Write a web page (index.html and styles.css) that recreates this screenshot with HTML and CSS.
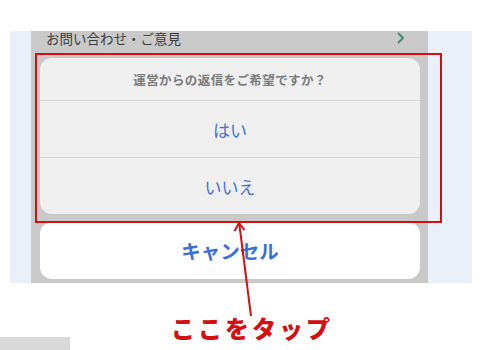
FILE: index.html
```html
<!DOCTYPE html>
<html lang="ja">
<head>
<meta charset="utf-8">
<link rel="stylesheet" href="styles.css">
</head>
<body>
<div class="page">
  <div class="panel">
    <div class="screen">
      <div class="header">
        <span class="header-title">お問い合わせ・ご意見</span>
        <svg class="chevron" width="8" height="12" viewBox="0 0 8 12"><path d="M1.5 1.5 L6 6 L1.5 10.5" fill="none" stroke="#3f8a6c" stroke-width="1.8" stroke-linecap="round" stroke-linejoin="round"/></svg>
      </div>
      <div class="sheet">
        <div class="sheet-title">運営からの返信をご希望ですか？</div>
        <div class="sheet-btn">はい</div>
        <div class="sheet-btn last">いいえ</div>
      </div>
      <div class="cancel">キャンセル</div>
    </div>
  </div>
  <div class="caption">ここをタップ</div>
  <div class="bar"></div>

  <div class="highlight"></div>
  <svg class="arrow" width="500" height="350" viewBox="0 0 500 350">
    <line x1="251" y1="316" x2="239.3" y2="224" stroke="#d40f0f" stroke-width="2"/>
    <path d="M234.5 231 L239 223 L244.5 230" fill="none" stroke="#d40f0f" stroke-width="2" stroke-linejoin="miter"/>
  </svg>
</div>
</body>
</html>
```
FILE: styles.css
```css
html, body {
  margin: 0;
  padding: 0;
  background: #ffffff;
}
body {
  font-family: "Noto Sans CJK JP", "Noto Sans", sans-serif;
  width: 500px;
  height: 350px;
  overflow: hidden;
}
.page {
  position: relative;
  width: 500px;
  height: 350px;
  padding-top: 31px;
  box-sizing: border-box;
}
.panel {
  margin-left: 10px;
  width: 462px;
  height: 252px;
  background: #e9f0f9;
  padding-left: 21px;
  box-sizing: border-box;
}
.screen {
  width: 397px;
  height: 252px;
  background: #c9c9c9;
}
.header {
  height: 27px;
  display: flex;
  align-items: flex-start;
  justify-content: space-between;
  padding: 0 23px 0 15px;
  box-sizing: border-box;
}
.header-title {
  font-size: 13.5px;
  line-height: 15px;
  color: #3c3c3c;
}
.chevron {
  margin-top: 1px;
}
.sheet {
  margin-left: 9px;
  width: 380px;
  height: 156px;
  background: #efefef;
  border-radius: 12px;
  display: flex;
  flex-direction: column;
}
.sheet-title {
  height: 43px;
  border-bottom: 1px solid #dadada;
  display: flex;
  align-items: center;
  justify-content: center;
  font-size: 12.5px;
  font-weight: 700;
  color: #7a7a7a;
  letter-spacing: 0.4px;
  box-sizing: border-box;
  padding-top: 1px;
}
.sheet-btn {
  height: 57px;
  border-bottom: 1px solid #dadada;
  display: flex;
  align-items: center;
  justify-content: center;
  font-size: 17px;
  color: #3d72d6;
  box-sizing: border-box;
}
.sheet-btn.last {
  border-bottom: none;
  height: 56px;
}
.cancel {
  margin-left: 9px;
  margin-top: 8px;
  width: 380px;
  height: 57px;
  background: #ffffff;
  border-radius: 12px;
  display: flex;
  align-items: center;
  justify-content: center;
  font-size: 19.5px;
  font-weight: 700;
  color: #3b6fd8;
}
.caption {
  height: 54px;
  padding-top: 27px;
  box-sizing: border-box;
  text-align: center;
  font-size: 24px;
  line-height: 36px;
  font-weight: 900;
  color: #d40f0f;
  letter-spacing: 3px;
  padding-left: 4px;
}
.bar {
  width: 70px;
  height: 13px;
  background: #d9d9d9;
}
.highlight {
  position: absolute;
  left: 35px;
  top: 53px;
  width: 403px;
  height: 166px;
  border: 2px solid #d40f0f;
}
.arrow {
  position: absolute;
  left: 0;
  top: 0;
}
```
